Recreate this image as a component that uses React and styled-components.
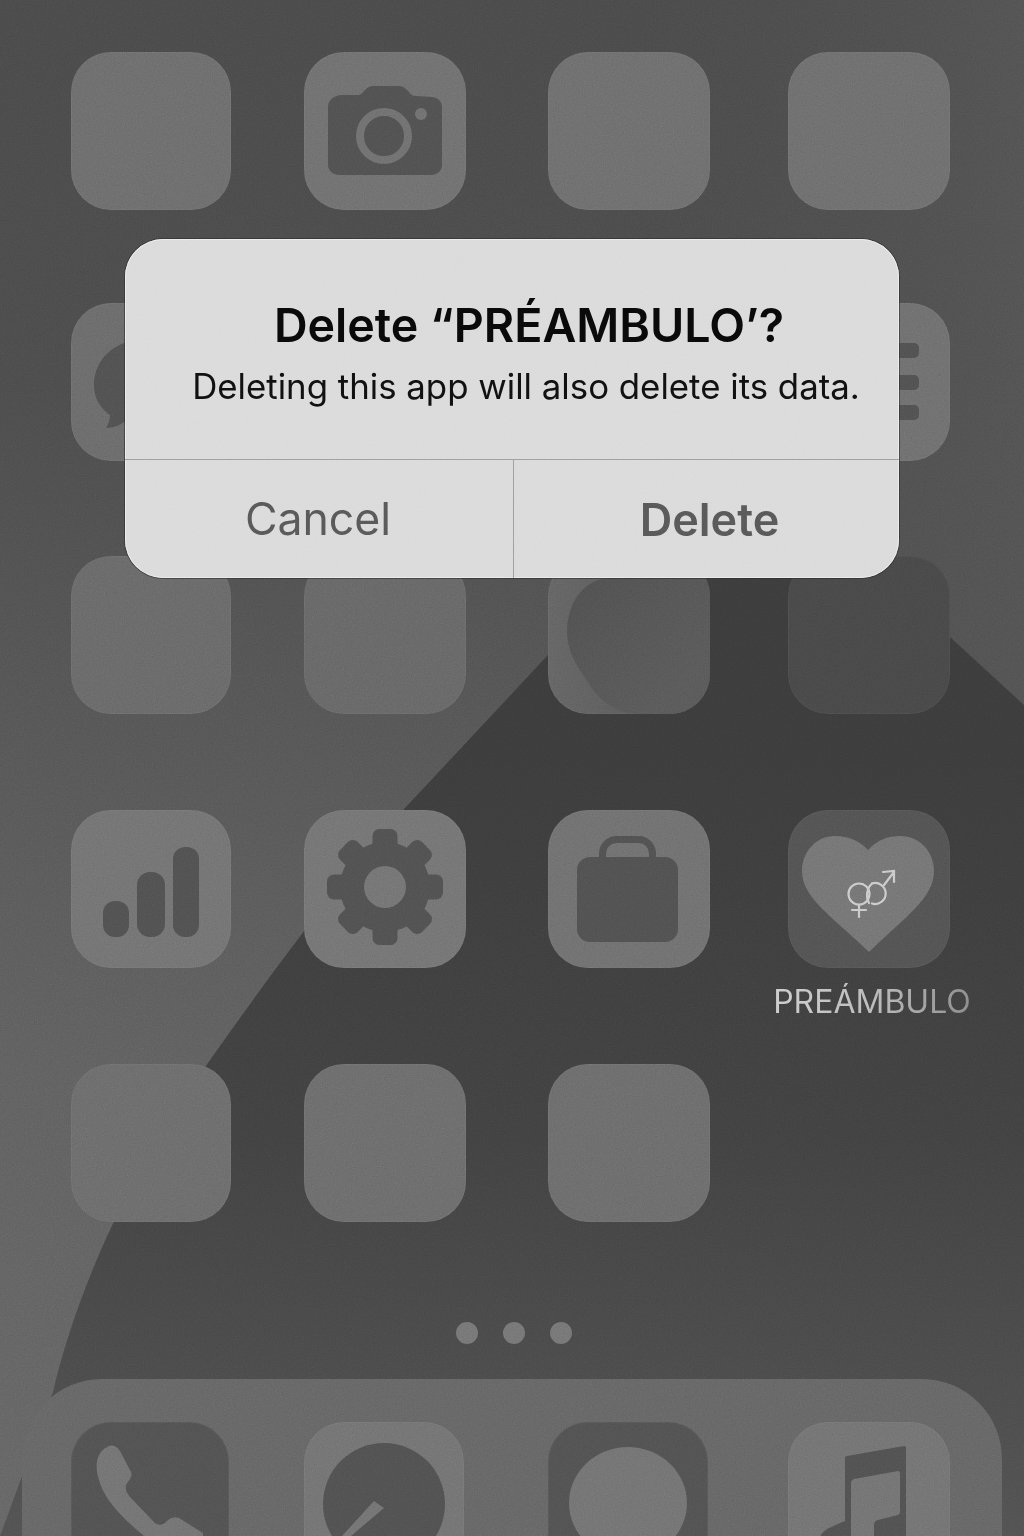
import React from "react";
import styled, { createGlobalStyle } from "styled-components";

const Global = createGlobalStyle`
  html, body { margin: 0; padding: 0; background: #4e4e4e; }
  * { box-sizing: border-box; }
`;

const Phone = styled.div`
  position: relative;
  width: 1024px;
  height: 1536px;
  overflow: hidden;
  display: flex;
  flex-direction: column;
  padding-top: 52px;
  font-family: Inter, "Liberation Sans", sans-serif;
  background: linear-gradient(180deg, #4d4d4d 0%, #4f4f4f 25%, #585858 45%, #646464 70%, #6a6a6a 100%);
`;

const Wallpaper = styled.svg`
  position: absolute;
  inset: 0;
  width: 1024px;
  height: 1536px;
`;

const Grain = styled.svg`
  position: absolute;
  inset: 0;
  width: 1024px;
  height: 1536px;
  pointer-events: none;
  opacity: 0.16;
  mix-blend-mode: overlay;
  z-index: 5;
`;

const AppGrid = styled.div`
  position: relative;
  display: grid;
  grid-template-columns: 233px 244px 240px 162px;
  grid-template-rows: 251px 253px 254px 254px 157px;
  padding-left: 71px;
`;

const Cell = styled.div`
  display: flex;
  flex-direction: column;
  align-items: flex-start;
`;

const LabelledCell = styled(Cell)`
  align-items: center;
`;

const Tile = styled.div`
  width: ${(p) => p.$w || 162}px;
  height: 158px;
  flex: none;
  border-radius: 40px;
  overflow: hidden;
  background: ${(p) => p.$tone || "#737373"};
  box-shadow: inset 0 0 0 1px rgba(255, 255, 255, 0.035);
`;

const Glyph = styled.svg`
  display: block;
  width: 100%;
  height: 100%;
`;

const AppName = styled.div`
  margin-top: 15px;
  transform: translateX(3px);
  font-size: 32px;
  line-height: 38px;
  white-space: nowrap;
  color: transparent;
  background: linear-gradient(90deg, #cfcfcf 0%, #bdbdbd 50%, #8f8f8f 100%);
  -webkit-background-clip: text;
  background-clip: text;
`;

const Dots = styled.div`
  position: relative;
  display: flex;
  justify-content: center;
  gap: 25px;
  margin-top: 101px;
  padding-left: 4px;
`;

const Dot = styled.span`
  width: 22px;
  height: 22px;
  border-radius: 50%;
  background: #7a7a7a;
`;

const Dock = styled.div`
  position: relative;
  flex: none;
  margin: 35px 22px 0 22px;
  padding: 43px 0 0 49px;
  height: 260px;
  border-radius: 80px 80px 0 0;
  background: #6a6a6a;
  display: grid;
  grid-template-columns: 233px 244px 240px 162px;
  align-content: start;
`;

const Alert = styled.div`
  position: absolute;
  left: 125px;
  top: 239px;
  width: 774px;
  height: 339px;
  z-index: 2;
  display: flex;
  flex-direction: column;
  border-radius: 38px;
  background: #dcdcdc;
  box-shadow: inset 0 0 0 1px #ececec, 0 0 0 1px rgba(40, 40, 40, 0.55);
`;

const AlertBody = styled.div`
  height: 221px;
  flex: none;
  display: flex;
  flex-direction: column;
  align-items: center;
  padding: 58px 0 0 34px;
  border-bottom: 1px solid #a2a2a2;
`;

const AlertTitle = styled.h1`
  margin: 0;
  font-size: 46.6px;
  line-height: 56px;
  font-weight: 600;
  color: #0a0a0a;
  white-space: nowrap;
`;

const AlertMessage = styled.p`
  margin: 11px 0 0;
  transform: translateX(-3px);
  font-size: 34.8px;
  line-height: 44px;
  font-weight: 400;
  color: #111111;
  white-space: nowrap;
`;

const AlertActions = styled.div`
  flex: 1;
  display: grid;
  grid-template-columns: 388px 1fr;
`;

const AlertButton = styled.div`
  display: flex;
  align-items: center;
  justify-content: center;
  padding: ${(p) => (p.$divided ? "0 0 0 6px" : "0 2px 0 0")};
  font-size: ${(p) => (p.$strong ? 45 : 44.6)}px;
  line-height: 1;
  font-weight: ${(p) => (p.$strong ? 600 : 400)};
  color: #5b5b5b;
  border-left: ${(p) => (p.$divided ? "1px solid #a2a2a2" : "none")};
`;

const DARK = "#545454";

const Camera = ({ tile }) => (
  <Glyph viewBox="304 52 162 158">
    <path fill={DARK} d="M342 95 L358 95 C361 95 362 93 364 91 C367 88 369 86 374 86 L398 86 C403 86 405 88 409 92 C411 95 413 96 416 96 L431 97 C437 97 442 101 442 107 L442 165 C442 171 437 175 431 175 L340 175 C333 175 328 171 328 165 L328 107 C328 100 334 95 342 95 Z" />
    <circle cx="384" cy="136" r="24" fill="none" stroke={tile} strokeWidth="8" />
    <circle cx="421" cy="114" r="6" fill={tile} />
  </Glyph>
);

const Bubble = () => (
  <Glyph viewBox="71 303 160 158">
    <path fill={DARK} d="M142 340 C114 340 94 360 94 385 C94 398 100 408 110 415 C110 420 108 425 106 428 C115 428 122 424 128 419 C132 421 137 422 142 422 C190 422 190 340 142 340 Z" />
  </Glyph>
);

const ListLines = () => (
  <Glyph viewBox="788 303 162 158">
    <rect x="870" y="343" width="49" height="15" rx="5" fill={DARK} />
    <rect x="870" y="375" width="49" height="15" rx="5" fill={DARK} />
    <rect x="870" y="405" width="49" height="15" rx="5" fill={DARK} />
  </Glyph>
);

const MoonTile = styled(Tile)`
  background: linear-gradient(90deg, #686868 0%, #5f5f5f 55%, #5a5a5a 100%);
`;

const Moon = () => (
  <Glyph viewBox="548 556 162 158">
    <defs>
      <linearGradient id="moonFade" x1="0" x2="0.7" y1="0.1" y2="0.9">
        <stop offset="0" stopColor="#525252" />
        <stop offset="0.5" stopColor="#585858" />
        <stop offset="1" stopColor="#5d5d5d" />
      </linearGradient>
    </defs>
    <path fill="url(#moonFade)" d="M610 578 C585 578 567 602 567 632 C567 652 578 668 588 682 C596 696 612 714 640 714 L710 714 L710 556 L640 556 C630 570 620 578 610 578 Z" />
  </Glyph>
);

const Bars = () => (
  <Glyph viewBox="71 810 160 158">
    <rect x="103" y="901" width="26" height="36" rx="12" fill={DARK} />
    <rect x="137" y="872" width="28" height="65" rx="13" fill={DARK} />
    <rect x="173" y="847" width="26" height="90" rx="12" fill={DARK} />
  </Glyph>
);

const Gear = ({ tile }) => (
  <Glyph viewBox="304 810 162 158">
    {[0, 45, 90, 135, 180, 225, 270, 315].map((a) => (
      <rect key={a} x="372.5" y="829" width="25" height="30" rx="7" fill={DARK} transform={`rotate(${a} 385 887)`} />
    ))}
    <circle cx="385" cy="887" r="45" fill={DARK} />
    <circle cx="385" cy="887" r="21" fill={tile} />
  </Glyph>
);

const Briefcase = () => (
  <Glyph viewBox="548 810 162 158">
    <rect x="602.5" y="839.5" width="50" height="40" rx="14" fill="none" stroke={DARK} strokeWidth="7" />
    <rect x="577" y="857" width="101" height="85" rx="13" fill={DARK} />
  </Glyph>
);

const HeartMark = () => (
  <Glyph viewBox="788 810 162 158">
    <path fill="#797979" d="M868 850 C858 839 846 836 835 836 C816 836 802 852 802 871 C802 898 832 916 869 952 C906 916 934 898 934 871 C934 852 920 836 900 836 C889 836 878 839 868 850 Z" />
    <g fill="none" stroke="#cdcdcd" strokeWidth="2.2" strokeLinecap="round">
      <circle cx="859" cy="894" r="10.5" />
      <path d="M859 905 L859 917 M852 910 L866 910" />
      <path d="M872 883.5 A10.5 10.5 0 1 1 872 903.5" />
      <path d="M872 883.5 C866 889 866 898 869 903" />
      <path d="M884 885 L894 872 M883 872 L894 871 L894 882" />
    </g>
  </Glyph>
);

const Handset = () => (
  <Glyph viewBox="72 1422 158 158">
    <path fill="#777777" d="M108 1447 C113 1444 118 1446 121 1451 L132 1472 C134 1477 130 1480 127 1485 C126 1490 128 1493 131 1497 L155 1522 C158 1525 162 1526 166 1523 C170 1518 175 1516 180 1518 L204 1533 L204 1560 L150 1540 C125 1520 105 1500 100 1480 C95 1465 98 1452 108 1447 Z" />
  </Glyph>
);

const Compass = ({ tile }) => (
  <Glyph viewBox="305 1422 160 158">
    <circle cx="385" cy="1504" r="61" fill={DARK} />
    <path fill={tile} d="M375 1501 L385 1508 L352 1536 L343 1536 Z" />
  </Glyph>
);

const Speech = () => (
  <Glyph viewBox="548 1422 160 158">
    <ellipse cx="628" cy="1503" rx="59" ry="56" fill="#777777" />
  </Glyph>
);

const Note = () => (
  <Glyph viewBox="789 1422 162 158">
    <path fill={DARK} d="M848 1456 L905 1446 Q907 1446 907 1448 L907 1540 L875 1540 L875 1525 Q875 1521 879 1520 L899 1515 Q901 1514 901 1512 L901 1473 Q901 1471 899 1471 L855 1479 Q852 1480 852 1483 L852 1540 L820 1540 Q822 1532 830 1528 L846 1521 L846 1458 Q846 1456 848 1456 Z" />
  </Glyph>
);

export default function App() {
  return (
    <>
      <Global />
      <Phone>
        <Wallpaper viewBox="0 0 1024 1536">
          <defs>
            <linearGradient id="hill" x1="0" x2="0" y1="0.25" y2="1">
              <stop offset="0" stopColor="#3e3e3e" />
              <stop offset="0.5" stopColor="#444444" />
              <stop offset="1" stopColor="#555555" />
            </linearGradient>
            <linearGradient id="side" x1="0" x2="1" y1="0" y2="0">
              <stop offset="0" stopColor="#4e4e4e" stopOpacity="0" />
              <stop offset="1" stopColor="#565656" stopOpacity="1" />
            </linearGradient>
          </defs>
          <rect x="600" y="0" width="424" height="760" fill="url(#side)" />
          <path fill="url(#hill)" d="M53 1392 C70 1320 110 1200 210 1060 C270 975 340 880 405 808 L548 655 L700 480 L800 480 L950 637 L1024 705 L1024 1536 L0 1536 L53 1392 Z" />
        </Wallpaper>

        <AppGrid>
          <Cell><Tile $w={160} $tone="#717171" /></Cell>
          <Cell><Tile $tone="#747474"><Camera tile="#747474" /></Tile></Cell>
          <Cell><Tile $tone="#727272" /></Cell>
          <Cell><Tile $tone="#727272" /></Cell>

          <Cell><Tile $w={160} $tone="#6f6f6f"><Bubble /></Tile></Cell>
          <Cell><Tile $tone="#6f6f6f" /></Cell>
          <Cell><Tile $tone="#6f6f6f" /></Cell>
          <Cell><Tile $tone="#737373"><ListLines /></Tile></Cell>

          <Cell><Tile $w={160} $tone="#6d6d6d" /></Cell>
          <Cell><Tile $tone="#6b6b6b" /></Cell>
          <Cell><MoonTile><Moon /></MoonTile></Cell>
          <Cell><Tile $tone="#4b4b4b" /></Cell>

          <Cell><Tile $w={160} $tone="#777777"><Bars /></Tile></Cell>
          <Cell><Tile $tone="#787878"><Gear tile="#787878" /></Tile></Cell>
          <Cell><Tile $tone="#747474"><Briefcase /></Tile></Cell>
          <LabelledCell>
            <Tile $tone="#565656"><HeartMark /></Tile>
            <AppName>PREÁMBULO</AppName>
          </LabelledCell>

          <Cell><Tile $w={160} $tone="#707070" /></Cell>
          <Cell><Tile $tone="#707070" /></Cell>
          <Cell><Tile $tone="#707070" /></Cell>
          <Cell />
        </AppGrid>

        <Dots>
          <Dot />
          <Dot />
          <Dot />
        </Dots>

        <Dock>
          <Cell><Tile $w={158} $tone="#555555"><Handset /></Tile></Cell>
          <Cell><Tile $w={160} $tone="#777777"><Compass tile="#777777" /></Tile></Cell>
          <Cell><Tile $w={160} $tone="#555555"><Speech /></Tile></Cell>
          <Cell><Tile $tone="#777777"><Note /></Tile></Cell>
        </Dock>

        <Alert>
          <AlertBody>
            <AlertTitle>Delete “PRÉAMBULO’?</AlertTitle>
            <AlertMessage>Deleting this app will also delete its data.</AlertMessage>
          </AlertBody>
          <AlertActions>
            <AlertButton>Cancel</AlertButton>
            <AlertButton $strong $divided>Delete</AlertButton>
          </AlertActions>
        </Alert>

        <Grain viewBox="0 0 1024 1536">
          <filter id="grainNoise" colorInterpolationFilters="sRGB">
            <feTurbulence type="fractalNoise" baseFrequency="0.9" numOctaves="2" stitchTiles="stitch" />
            <feColorMatrix type="matrix" values="0.33 0.33 0.33 0 0 0.33 0.33 0.33 0 0 0.33 0.33 0.33 0 0 0 0 0 0 1" />
          </filter>
          <rect width="1024" height="1536" filter="url(#grainNoise)" />
        </Grain>
      </Phone>
    </>
  );
}
